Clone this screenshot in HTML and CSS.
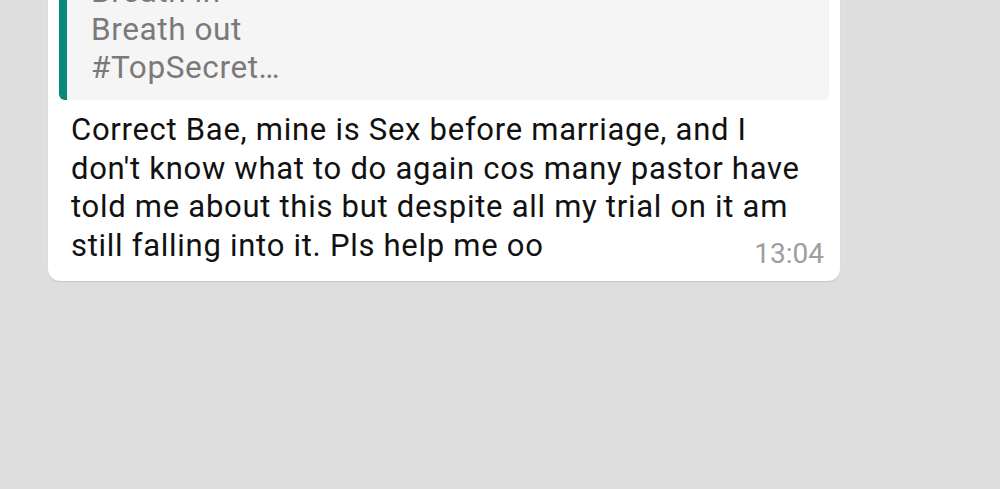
FILE: index.html
```html
<!DOCTYPE html>
<html>
<head>
<meta charset="utf-8">
<link rel="stylesheet" href="styles.css">
</head>
<body>
<div class="chat">
  <div class="bubble">
    <div class="quote">
      <div class="quote-text">Breath in<br>Breath out<br>#TopSecret…</div>
    </div>
    <p class="text">Correct Bae, mine is Sex before marriage, and I<br>don't know what to do again cos many pastor have<br>told me about this but despite all my trial on it am<br>still falling into it. Pls help me oo</p>
    <span class="time">13:04</span>
  </div>
</div>
</body>
</html>
```
FILE: styles.css
```css
html, body {
  margin: 0;
  padding: 0;
  background: #dedede;
  height: 100%;
  overflow: hidden;
}
.chat {
  font-family: Roboto, "Noto Sans", sans-serif;
  padding-left: 48px;
}
.bubble {
  position: relative;
  width: 792px;
  box-sizing: border-box;
  margin-top: -41px;
  background: #ffffff;
  border-radius: 12px;
  padding: 8px 11px 16px 11px;
  box-shadow: 0 1px 1px rgba(0, 0, 0, 0.12);
}
.quote {
  background: #f5f5f5;
  border-left: 8px solid #07897a;
  border-radius: 6px;
  padding: 6px 12px 13px 24px;
}
.quote-text {
  font-size: 31.5px;
  letter-spacing: 0.6px;
  line-height: 38px;
  color: #7a7a7a;
}
.text {
  margin: 11px 0 0 0;
  padding: 0 4px 0 12px;
  font-size: 31px;
  letter-spacing: 0.72px;
  line-height: 38.5px;
  white-space: nowrap;
  color: #111111;
}
.time {
  position: absolute;
  right: 16px;
  bottom: 13px;
  font-size: 28px;
  line-height: 28px;
  color: #9e9e9e;
}
```
